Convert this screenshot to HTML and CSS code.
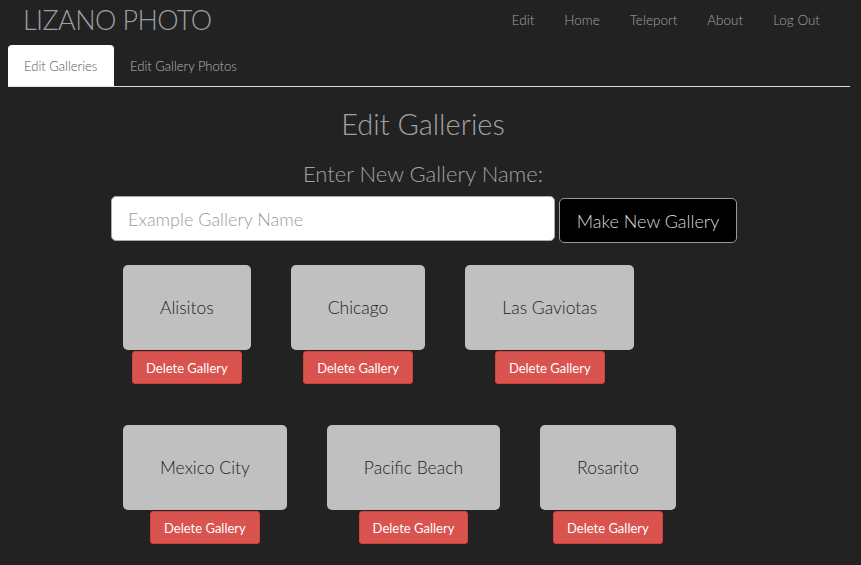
FILE: index.html
```html
<!DOCTYPE html>
<html>
<head>
<meta charset="utf-8">
<link rel="stylesheet" href="styles.css">
</head>
<body>
<nav class="navbar">
  <div class="brand">LIZANO PHOTO</div>
  <ul class="nav-links">
    <li>Edit</li>
    <li>Home</li>
    <li>Teleport</li>
    <li>About</li>
    <li>Log Out</li>
  </ul>
</nav>
<div class="tabs">
  <div class="tab active">Edit Galleries</div>
  <div class="tab">Edit Gallery Photos</div>
</div>
<main class="main">
  <h1 class="title">Edit Galleries</h1>
  <h2 class="subtitle">Enter New Gallery Name:</h2>
  <div class="form-row">
    <input class="name-input" type="text" placeholder="Example Gallery Name">
    <button class="make-btn">Make New Gallery</button>
  </div>
  <div class="galleries">
    <div class="row">
      <div class="item"><div class="card">Alisitos</div><button class="del">Delete Gallery</button></div>
      <div class="item"><div class="card">Chicago</div><button class="del">Delete Gallery</button></div>
      <div class="item"><div class="card">Las Gaviotas</div><button class="del">Delete Gallery</button></div>
    </div>
    <div class="row">
      <div class="item"><div class="card">Mexico City</div><button class="del">Delete Gallery</button></div>
      <div class="item"><div class="card">Pacific Beach</div><button class="del">Delete Gallery</button></div>
      <div class="item"><div class="card">Rosarito</div><button class="del">Delete Gallery</button></div>
    </div>
  </div>
</main>
</body>
</html>
```
FILE: styles.css
```css
* { box-sizing: border-box; }
html, body { margin: 0; background: #222222; height: 100%; }
body {
  font-family: "Lato", "Open Sans", sans-serif;
  font-weight: 300;
  color: #9d9d9d;
}
.navbar {
  display: flex;
  align-items: center;
  justify-content: space-between;
  height: 40px;
  padding: 0 41px 0 23px;
}
.brand {
  font-size: 27px;
  color: #9aa0a6;
  letter-spacing: -0.6px;
  margin-top: -2px;
}
.nav-links {
  list-style: none;
  display: flex;
  margin: 0;
  padding: 0;
  font-size: 13.5px;
  color: #a3a3a3;
}
.nav-links li { margin-left: 30px; }
.tabs {
  display: flex;
  margin: 5px 11px 0 8px;
  border-bottom: 1px solid #dddddd;
  height: 42px;
}
.tab {
  padding: 0 16px;
  line-height: 42px;
  font-size: 13px;
  color: #b8b8b8;
  border-radius: 4px 4px 0 0;
}
.tab.active {
  background: #ffffff;
  color: #555555;
  width: 106px;
}
.main {
  padding-right: 15px;
  display: flex;
  flex-direction: column;
  align-items: center;
}
.title {
  font-weight: 300;
  font-size: 29px;
  color: #a2a2a2;
  margin: 19px 0 0;
  line-height: 36px;
}
.subtitle {
  font-weight: 300;
  font-size: 22px;
  color: #a2a2a2;
  margin: 17px 0 0;
  line-height: 30px;
}
.form-row {
  display: flex;
  align-items: flex-start;
  margin-top: 7px;
  margin-left: 2px;
  gap: 4px;
}
.name-input {
  width: 444px;
  height: 45px;
  border: 1px solid #aaaaaa;
  border-radius: 5px;
  padding: 0 16px;
  font-family: inherit;
  font-weight: 300;
  font-size: 18px;
  background: #ffffff;
}
.name-input::placeholder { color: #9a9a9a; }
.make-btn {
  margin-top: 2px;
  width: 178px;
  height: 45px;
  background: #000000;
  color: #d8d8d8;
  border: 1px solid #9a9a9a;
  border-radius: 5px;
  font-family: inherit;
  font-weight: 300;
  font-size: 18px;
  padding: 0;
}
.galleries {
  width: 626px;
  margin-left: 2px;
  margin-top: 22px;
}
.row {
  display: flex;
  gap: 40px;
  padding-left: 12px;
  margin-bottom: 41px;
}
.item {
  display: flex;
  flex-direction: column;
  align-items: center;
}
.card {
  height: 85px;
  padding: 0 37px;
  background: #c0c0c0;
  border-radius: 5px;
  color: #222222;
  font-size: 17.5px;
  display: flex;
  align-items: center;
  justify-content: center;
}
.del {
  margin-top: 1px;
  height: 33px;
  padding: 0 13px;
  background: #d9534f;
  color: #ffffff;
  border: 1px solid #d43f3a;
  border-radius: 3px;
  font-family: inherit;
  font-weight: 400;
  font-size: 13px;
}
```
